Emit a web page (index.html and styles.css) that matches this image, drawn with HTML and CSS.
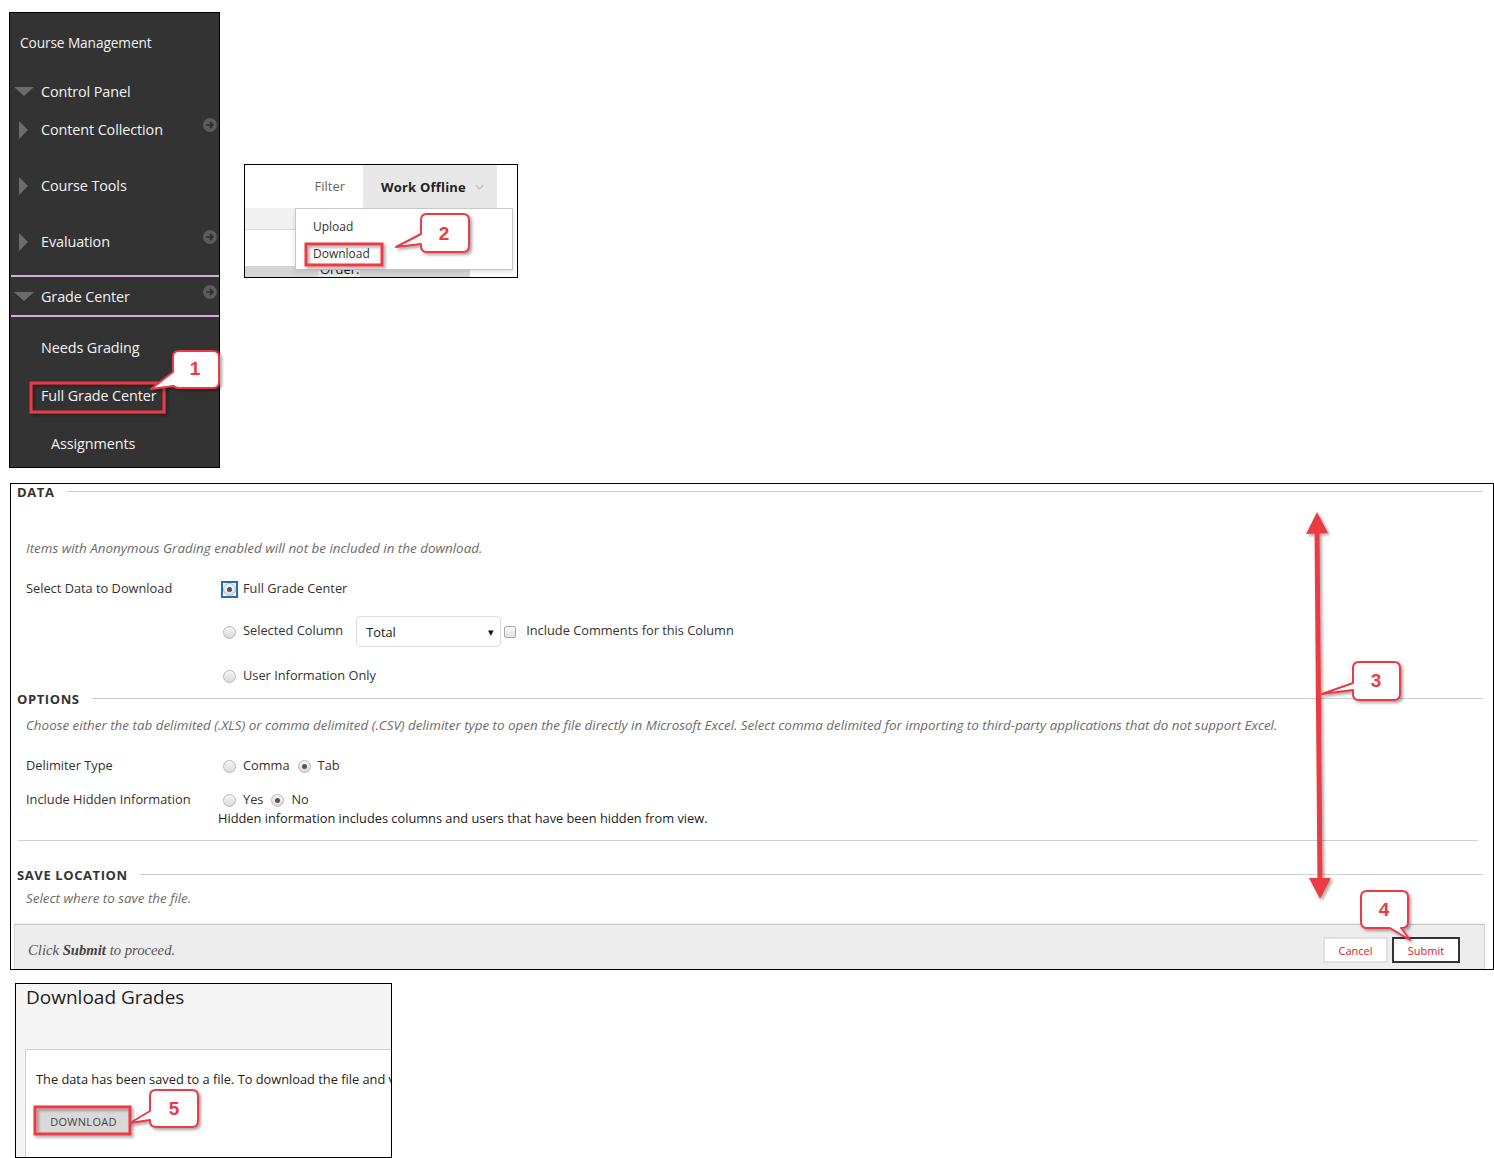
FILE: index.html
```html
<!DOCTYPE html>
<html lang="en">
<head>
    <meta charset="UTF-8">
    <title>Download Grades - steps</title>
    <link rel="stylesheet" href="styles.css">
</head>
<body>
    <div class="top">
        <nav class="cm">
            <div class="cm-title">Course Management</div>
            <div class="cm-row"><span class="tri down"></span>Control Panel</div>
            <div class="cm-row"><span class="tri right"></span>Content Collection
                <svg class="go" viewBox="0 0 14 14"><circle cx="7" cy="7" r="7"/><path d="M3.3 7h6.4M7 4.2 9.8 7 7 9.8"/></svg>
            </div>
            <div class="cm-row gap"><span class="tri right"></span>Course Tools</div>
            <div class="cm-row gap"><span class="tri right"></span>Evaluation
                <svg class="go" viewBox="0 0 14 14"><circle cx="7" cy="7" r="7"/><path d="M3.3 7h6.4M7 4.2 9.8 7 7 9.8"/></svg>
            </div>
            <div class="cm-sep first"></div>
            <div class="cm-row"><span class="tri down"></span>Grade Center
                <svg class="go" viewBox="0 0 14 14"><circle cx="7" cy="7" r="7"/><path d="M3.3 7h6.4M7 4.2 9.8 7 7 9.8"/></svg>
            </div>
            <div class="cm-sep"></div>
            <div class="cm-sub first">Needs Grading</div>
            <div class="cm-sub">Full Grade Center</div>
            <div class="cm-sub deep">Assignments</div>
        </nav>

        <div class="wo">
            <div class="wo-bar">
                <div class="wo-filter">Filter</div>
                <div class="wo-tab">Work Offline
                    <svg class="chev" viewBox="0 0 10 6"><path d="M1 1l4 4 4-4"/></svg>
                </div>
            </div>
            <div class="wo-body">
                <div class="wo-band"></div>
                <div class="wo-foot"><span>Order:</span></div>
                <ul class="wo-menu">
                    <li>Upload</li>
                    <li>Download</li>
                </ul>
            </div>
        </div>
    </div>

    <section class="dl-form">
        <div class="sec-head"><span>DATA</span><i></i></div>
        <p class="note first">Items with Anonymous Grading enabled will not be included in the download.</p>

        <div class="frow r-sel">
            <div class="flabel">Select Data to Download</div>
            <div class="field"><span class="focus"><span class="radio on"></span></span>Full Grade Center</div>
        </div>
        <div class="frow r-col">
            <div class="flabel"></div>
            <div class="field"><span class="radio"></span><span class="lift">Selected Column</span>
                <div class="select">Total<span>&#9662;</span></div>
                <span class="check"></span><span class="lift">Include Comments for this Column</span>
            </div>
        </div>
        <div class="frow r-usr">
            <div class="flabel"></div>
            <div class="field"><span class="radio"></span>User Information Only</div>
        </div>

        <div class="sec-head opt"><span>OPTIONS</span><i></i></div>
        <p class="note">Choose either the tab delimited (.XLS) or comma delimited (.CSV) delimiter type to open the file directly in Microsoft Excel. Select comma delimited for importing to third-party applications that do not support Excel.</p>

        <div class="frow r-del">
            <div class="flabel">Delimiter Type</div>
            <div class="field"><span class="radio"></span>Comma<span class="radio on next"></span>Tab</div>
        </div>
        <div class="frow r-hid">
            <div class="flabel">Include Hidden Information</div>
            <div class="field"><span class="radio"></span>Yes<span class="radio on next"></span>No</div>
        </div>
        <p class="hid-note">Hidden information includes columns and users that have been hidden from view.</p>
        <div class="rule"></div>

        <div class="sec-head save"><span>SAVE LOCATION</span><i></i></div>
        <p class="note last">Select where to save the file.</p>

        <div class="ffoot">
            <p>Click <b>Submit</b> to proceed.</p>
            <button class="btn cancel">Cancel</button>
            <button class="btn submit">Submit</button>
        </div>
    </section>

    <section class="dg">
        <h2>Download Grades</h2>
        <div class="dg-box">
            <p>The data has been saved to a file. To download the file and view it, click Download.</p>
            <button class="dg-btn">DOWNLOAD</button>
        </div>
    </section>

    <!-- annotations drawn over the screenshots -->
    <svg class="notes" viewBox="0 0 1494 1158" width="1494" height="1158">
        <defs>
            <filter id="sh" x="-20%" y="-20%" width="140%" height="140%">
                <feDropShadow dx="2" dy="2" stdDeviation="1.5" flood-color="#000" flood-opacity="0.35"/>
            </filter>
        </defs>
        <g class="hl">
            <rect x="31" y="383" width="133" height="29"/>
            <rect x="306" y="244" width="76" height="21"/>
            <rect x="35" y="1107" width="95" height="27"/>
        </g>
        <g class="arrow">
            <line x1="1317" y1="528" x2="1320" y2="884"/>
            <polygon points="1317,512 1306,534 1328,533"/>
            <polygon points="1320,899 1309,878 1331,878"/>
        </g>
        <g class="bubble">
            <path d="M179,351 H213 Q219,351 219,357 V382 Q219,388 213,388 H180 Q175,388 174,386 L151,389 L173,372 V357 Q173,351 179,351 Z"/>
            <path d="M427,214 H463 Q469,214 469,220 V246 Q469,252 463,252 H427 Q421,252 421,246 V244 L396,247 L421,234 V220 Q421,214 427,214 Z"/>
            <path d="M1359,662 H1394 Q1400,662 1400,668 V694 Q1400,700 1394,700 H1359 Q1353,700 1353,694 V690 L1322,694 L1353,683 V668 Q1353,662 1359,662 Z"/>
            <path d="M1367,891 H1402 Q1408,891 1408,897 V922 Q1408,928 1402,928 H1401 L1410,940 L1390,928 H1367 Q1361,928 1361,922 V897 Q1361,891 1367,891 Z"/>
            <path d="M156,1090 H192 Q198,1090 198,1096 V1121 Q198,1127 192,1127 H156 Q150,1127 150,1121 V1120 L130,1123 L150,1111 V1096 Q150,1090 156,1090 Z"/>
        </g>
        <g class="num">
            <text x="195" y="375">1</text>
            <text x="444" y="240">2</text>
            <text x="1376" y="687">3</text>
            <text x="1384" y="916">4</text>
            <text x="174" y="1115">5</text>
        </g>
    </svg>
</body>
</html>
```

FILE: styles.css
```css
body{
    margin: 0;
    background-color: #fff;
    font-family: "Open Sans", "Liberation Sans", sans-serif;
    color: #333;
    position: relative;
    width: 1494px;
    height: 1158px;
    overflow: hidden;
}
p{
    margin: 0;
}

/* top row: course menu + work offline menu */
.top{
    display: flex;
    align-items: flex-start;
    padding-top: 12px;
}

.cm{
    width: 209px;
    height: 454px;
    margin-left: 9px;
    border: 1px solid #000;
    background-color: #333;
    color: #f2f2f2;
    font-size: 14.4px;
    letter-spacing: -0.1px;
}
.cm-title{
    height: 59px;
    line-height: 59px;
    padding-left: 10px;
    font-size: 13.7px;
}
.cm-row{
    height: 38px;
    display: flex;
    align-items: center;
}
.cm-row.gap{
    margin-top: 18px;
}
.tri{
    width: 0;
    height: 0;
    flex-shrink: 0;
}
.tri.down{
    margin: 1px 7px 0 4px;
    border-left: 10px solid transparent;
    border-right: 10px solid transparent;
    border-top: 9px solid #6c6c6c;
}
.tri.right{
    margin: 1px 13px 0 9px;
    border-top: 9px solid transparent;
    border-bottom: 9px solid transparent;
    border-left: 9px solid #6c6c6c;
}
.go{
    width: 14px;
    height: 14px;
    margin-left: auto;
    margin-right: 2px;
    align-self: flex-start;
    margin-top: 8px;
}
.go circle{
    fill: #5b5b5b;
}
.go path{
    fill: none;
    stroke: #2c2c2c;
    stroke-width: 1.7;
}
.cm-sep{
    height: 2px;
    margin-left: 1px;
    background-color: #d6a9df;
}
.cm-sep.first{
    margin-top: 15px;
}
.cm-sub{
    height: 38px;
    line-height: 38px;
    padding-left: 31px;
    margin-top: 10px;
}
.cm-sub.first{
    margin-top: 12px;
}
.cm-sub.deep{
    padding-left: 41px;
}

.wo{
    width: 272px;
    height: 112px;
    margin: 152px 0 0 24px;
    border: 1px solid #000;
    background-color: #fff;
    font-size: 13px;
}
.wo-bar{
    display: flex;
    height: 43px;
}
.wo-filter{
    width: 118px;
    padding-right: 18px;
    box-sizing: border-box;
    text-align: right;
    line-height: 43px;
    color: #666;
}
.wo-tab{
    width: 134px;
    padding-left: 18px;
    box-sizing: border-box;
    background-color: #e8e8e8;
    display: flex;
    align-items: center;
    font-weight: bold;
    color: #222;
    letter-spacing: 0.2px;
}
.chev{
    width: 9px;
    height: 6px;
    margin-left: 9px;
}
.chev path{
    fill: none;
    stroke: #bbb;
    stroke-width: 1.3;
}
.wo-body{
    position: relative;
    height: 69px;
}
.wo-band{
    width: 225px;
    height: 21px;
    background-color: #f1f1f1;
    border-bottom: 1px solid #ddd;
}
.wo-foot{
    width: 225px;
    height: 11px;
    margin-top: 36px;
    background-color: #d5d5d5;
    overflow: hidden;
}
.wo-foot span{
    display: block;
    width: 40px;
    margin-left: 73px;
    padding-left: 2px;
    margin-top: -6px;
    background-color: #e8e8e8;
    color: #111;
}
.wo-menu{
    position: absolute;
    top: 0;
    left: 50px;
    margin: 0;
    padding: 6px 0 0 17px;
    box-sizing: border-box;
    width: 218px;
    height: 62px;
    list-style: none;
    background-color: #fff;
    border: 1px solid #c8c8c8;
    box-shadow: 0 2px 4px rgba(0, 0, 0, 0.12);
    font-size: 12px;
    color: #333;
}
.wo-menu li{
    height: 27px;
    line-height: 24px;
}

/* download form */
.dl-form{
    width: 1482px;
    height: 485px;
    margin: 15px 0 0 10px;
    border: 1px solid #000;
    background-color: #fff;
    font-size: 12.8px;
    overflow: hidden;
}
.sec-head{
    display: flex;
    align-items: center;
    height: 15px;
    padding: 0 10px 0 6px;
    font-size: 13px;
    font-weight: bold;
    color: #333;
    letter-spacing: 0.6px;
}
.sec-head i{
    flex: 1;
    height: 1px;
    margin-left: 12px;
    background-color: #cfcfcf;
}
.sec-head.opt{
    margin-top: 6px;
}
.sec-head.save{
    margin-top: 26px;
}
.note{
    padding-left: 15px;
    line-height: 20px;
    margin-top: 9px;
    font-size: 13.4px;
    font-style: italic;
    color: #6b6b6b;
}
.note.first{
    margin-top: 39px;
}
.note.last{
    margin-top: 6px;
}
.frow{
    display: flex;
    align-items: center;
    height: 20px;
}
.flabel{
    width: 207px;
    padding-left: 15px;
    box-sizing: border-box;
    flex-shrink: 0;
}
.field{
    display: flex;
    align-items: center;
    color: #333;
}
.lift{
    margin-top: -3px;
}
.r-sel{
    margin-top: 20px;
}
.r-col{
    margin-top: 18px;
    height: 31px;
}
.r-usr{
    margin-top: 18px;
}
.r-del{
    margin-top: 20px;
}
.r-hid{
    margin-top: 15px;
    height: 18px;
}
.radio{
    width: 11px;
    height: 11px;
    margin: 2px 7px 0 5px;
    border: 1px solid #b8b8b8;
    border-radius: 50%;
    background: linear-gradient(#f6f6f6, #dadada);
    display: flex;
    align-items: center;
    justify-content: center;
    flex-shrink: 0;
}
.radio.on::after{
    content: "";
    width: 5px;
    height: 5px;
    border-radius: 50%;
    background-color: #555;
}
.radio.next{
    margin-left: 8px;
}
.focus{
    display: flex;
    margin: 2px 5px 0 3px;
    border: 2px solid #1b6fc4;
}
.focus .radio{
    margin: 0;
}
.select{
    width: 145px;
    height: 31px;
    margin-left: 13px;
    padding: 0 6px 0 9px;
    box-sizing: border-box;
    border: 1px solid #ddd;
    border-radius: 4px;
    display: flex;
    align-items: center;
    justify-content: space-between;
    color: #222;
}
.select span{
    font-size: 11px;
    color: #111;
}
.check{
    width: 10px;
    height: 10px;
    margin: 0 10px 0 3px;
    border: 1px solid #aaa;
    border-radius: 2px;
    background: linear-gradient(#fafafa, #e2e2e2);
}
.hid-note{
    padding-left: 207px;
    line-height: 20px;
    color: #222;
}
.rule{
    height: 1px;
    margin: 12px 15px 0 7px;
    background-color: #d0d0d0;
}
.ffoot{
    display: flex;
    align-items: center;
    height: 46px;
    margin: 16px 8px 0 3px;
    padding: 6px 24px 0 13px;
    box-sizing: border-box;
    background-color: #ededed;
    border: 1px solid #d5d5d5;
    border-top-color: #c4c4c4;
    box-shadow: 0 -1px 3px rgba(0, 0, 0, 0.08);
}
.ffoot p{
    font-family: "Liberation Serif", serif;
    font-style: italic;
    font-size: 14.7px;
    color: #555;
}
.ffoot b{
    color: #444;
}
.btn{
    height: 26px;
    background-color: #fff;
    font-family: "Open Sans", sans-serif;
    font-size: 11px;
    color: #d3222c;
    padding: 0;
}
.cancel{
    width: 65px;
    margin-left: auto;
    border: 2px solid #e0e0e0;
}
.submit{
    width: 68px;
    margin-left: 4px;
    border: 2px solid #333;
}

/* download grades page */
.dg{
    width: 375px;
    height: 173px;
    margin: 13px 0 0 15px;
    border: 1px solid #000;
    background-color: #f5f5f5;
    overflow: hidden;
}
.dg h2{
    margin: 0;
    padding-left: 10px;
    height: 26px;
    line-height: 26px;
    font-size: 19px;
    font-weight: normal;
    color: #1e1e1e;
}
.dg-box{
    width: 500px;
    height: 120px;
    margin: 39px 0 0 9px;
    padding: 19px 0 0 10px;
    border: 1px solid #cfcfcf;
    background-color: #fff;
}
.dg-box p{
    line-height: 20px;
    font-size: 12.8px;
    color: #222;
    white-space: nowrap;
}
.dg-btn{
    width: 93px;
    height: 24px;
    margin: 20px 0 0 1px;
    padding: 0;
    border: none;
    border-radius: 2px;
    background-color: #d9d9d9;
    font-family: "Open Sans", sans-serif;
    font-size: 11px;
    color: #444;
    letter-spacing: 0.3px;
}

/* annotation overlay */
.notes{
    position: absolute;
    top: 0;
    left: 0;
    pointer-events: none;
}
.hl rect{
    fill: none;
    stroke: #ec3a44;
    stroke-width: 3;
    filter: url(#sh);
}
.arrow line{
    stroke: #ec3a44;
    stroke-width: 5;
}
.arrow{
    fill: #ec3a44;
    filter: url(#sh);
}
.bubble path{
    fill: #fff;
    stroke: #ec3a44;
    stroke-width: 2;
    stroke-linejoin: round;
    filter: url(#sh);
}
.num text{
    font-family: "Liberation Sans", Arial, sans-serif;
    font-weight: bold;
    font-size: 19px;
    fill: #ec3a44;
    text-anchor: middle;
}
```
